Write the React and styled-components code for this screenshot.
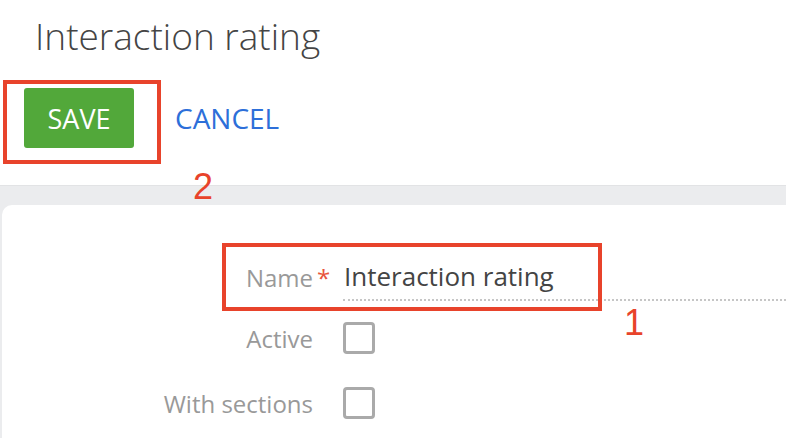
import styled, { createGlobalStyle } from 'styled-components';

const Global = createGlobalStyle`
  html, body {
    margin: 0;
    padding: 0;
    background: #fff;
    font-family: "Open Sans", "Liberation Sans", sans-serif;
    overflow: hidden;
  }
  * { box-sizing: border-box; }
`;

const Page = styled.div`
  position: relative;
  width: 786px;
  height: 438px;
  display: flex;
  flex-direction: column;
`;

const Header = styled.div`
  padding: 11px 0 0 24px;
  height: 185px;
`;

const Title = styled.h1`
  margin: 0 0 0 11px;
  font-size: 37px;
  font-weight: 300;
  line-height: 50px;
  color: #444;
`;

const Toolbar = styled.div`
  display: flex;
  align-items: center;
  gap: 41px;
  margin-top: 27px;
`;

const SaveButton = styled.button`
  width: 110px;
  height: 60px;
  border: none;
  border-radius: 3px;
  background: #52a83a;
  color: #fff;
  font-family: inherit;
  font-size: 27px;
  font-weight: 400;
  padding: 0;
`;

const CancelButton = styled.button`
  border: none;
  background: none;
  padding: 0;
  color: #2d6fd9;
  font-family: inherit;
  font-size: 28px;
`;

const Band = styled.div`
  flex: 1;
  background: #ebecee;
  border-top: 1px solid #e2e3e5;
  padding: 19px 0 0 2px;
  display: flex;
`;

const Card = styled.div`
  flex: 1;
  background: #fff;
  border-top-left-radius: 10px;
  padding-top: 48px;
`;

const Row = styled.div`
  display: grid;
  grid-template-columns: 311px 30px 1fr;
  align-items: center;
  height: ${p => p.$h}px;
`;

const Label = styled.div`
  text-align: right;
  font-size: 24px;
  color: #999;
`;

const Required = styled.span`
  color: #e8543c;
  font-size: 24px;
  padding-left: 4px;
  align-self: center;
`;

const Field = styled.div`
  font-size: 26px;
  color: #444;
  padding-left: 1px;
  border-bottom: 2px dotted #c6c6c6;
  height: 48px;
  line-height: 46px;
`;

const Checkbox = styled.div`
  width: 32px;
  height: 32px;
  border: 3px solid #aaa;
  border-radius: 4px;
`;

const Mark = styled.div`
  position: absolute;
  border: 4px solid #e8432b;
  left: ${p => p.$x}px;
  top: ${p => p.$y}px;
  width: ${p => p.$w}px;
  height: ${p => p.$h}px;
`;

const Note = styled.div`
  position: absolute;
  left: ${p => p.$x}px;
  top: ${p => p.$y}px;
  font-family: "Liberation Sans", Arial, sans-serif;
  font-size: 36px;
  line-height: 36px;
  color: #e8432b;
`;

export default function App() {
  return (
    <Page>
      <Global />
      <Header>
        <Title>Interaction rating</Title>
        <Toolbar>
          <SaveButton>SAVE</SaveButton>
          <CancelButton>CANCEL</CancelButton>
        </Toolbar>
      </Header>
      <Band>
        <Card>
          <Row $h={48}>
            <Label>Name</Label>
            <Required>*</Required>
            <Field>Interaction rating</Field>
          </Row>
          <Row $h={74}>
            <Label>Active</Label>
            <span />
            <Checkbox />
          </Row>
          <Row $h={56}>
            <Label>With sections</Label>
            <span />
            <Checkbox />
          </Row>
        </Card>
      </Band>
      <Mark $x={3} $y={80} $w={158} $h={84} />
      <Mark $x={222} $y={243} $w={380} $h={68} />
      <Note $x={193} $y={169}>2</Note>
      <Note $x={624} $y={305}>1</Note>
    </Page>
  );
}
